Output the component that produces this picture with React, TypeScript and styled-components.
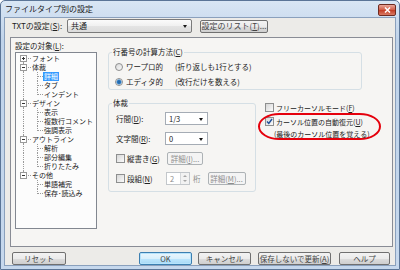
import React from 'react'
import styled, { createGlobalStyle, css } from 'styled-components'

const GlobalStyle = createGlobalStyle`
  html, body { margin: 0; padding: 0; }
  body {
    width: 400px;
    height: 270px;
    overflow: hidden;
    background: #fff;
    font-family: "Noto Sans CJK JP", "Noto Sans", sans-serif;
    font-size: 7.5px;
    color: #222;
  }
`

const Window = styled.div`
  box-sizing: border-box;
  width: 400px;
  height: 270px;
  display: flex;
  flex-direction: column;
  padding: 0 3px 3px 3px;
  background: linear-gradient(#d9e6f4, #bfd3ea 40px, #c6d8ed);
  border: 1px solid #5b7597;
  border-radius: 5px 5px 0 0;
`

const TitleBar = styled.div`
  height: 16px;
  display: flex;
  align-items: flex-start;
`

const Title = styled.span`
  margin: 2px 0 0 1px;
  font-size: 8px;
  line-height: 11px;
  color: #1b1b1b;
`

const CloseButton = styled.div`
  margin: 3px 0 0 auto;
  width: 18px;
  height: 12px;
  box-sizing: border-box;
  border: 1px solid #6f2b20;
  border-radius: 2px;
  background: linear-gradient(#e8a79a, #d25a43 50%, #c23a22 50%, #d97a64);
  display: flex;
  align-items: center;
  justify-content: center;
`

const Client = styled.div`
  flex: 1;
  display: flex;
  flex-direction: column;
  background: #ecebe8;
  border: 1px solid #8aa0bc;
`

const TopRow = styled.div`
  margin: 1px 0 0 7px;
  height: 14px;
  display: flex;
  align-items: center;
  font-size: 8px;
`

const Label = styled.span<{ $w?: number; $ml?: number }>`
  flex: none;
  ${p => p.$w !== undefined && css`width: ${p.$w}px;`}
  margin-left: ${p => p.$ml ?? 0}px;
  line-height: 10px;
  white-space: nowrap;
`

const U = styled.span`
  text-decoration: underline;
`

const Combo = styled.div<{ $w: number; $plain?: boolean }>`
  flex: none;
  width: ${p => p.$w}px;
  height: ${p => (p.$plain ? 13 : 14)}px;
  box-sizing: border-box;
  border: 1px solid ${p => (p.$plain ? '#a5acb5' : '#7a7a7a')};
  border-radius: ${p => (p.$plain ? 0 : 2)}px;
  background: ${p => (p.$plain ? '#fff' : 'linear-gradient(#fbfbfb, #f0f0f0 50%, #e4e4e4 51%, #dcdcdc)')};
  display: flex;
  align-items: center;
  padding-left: 3px;
  line-height: 10px;
`

const Arrow = styled.span`
  margin: 1px 4px 0 auto;
  width: 0;
  height: 0;
  border-left: 2.5px solid transparent;
  border-right: 2.5px solid transparent;
  border-top: 3px solid #1a1a1a;
`

const Button = styled.div<{ $w: number; $ml?: number; $default?: boolean; $disabled?: boolean }>`
  flex: none;
  width: ${p => p.$w}px;
  height: 13px;
  margin-left: ${p => p.$ml ?? 0}px;
  box-sizing: border-box;
  border: 1px solid #707070;
  border-radius: 2px;
  background: linear-gradient(#f3f3f3, #ebebeb 50%, #dddddd 51%, #cfcfcf);
  display: flex;
  align-items: center;
  justify-content: center;
  line-height: 10px;
  color: #444;
  white-space: nowrap;
  ${p =>
    p.$default &&
    css`
      border-color: #3c7fb1;
      background: linear-gradient(#eaf6fd, #d9f0fc 50%, #bee6fd 51%, #a7d9f5);
      box-shadow: inset 0 0 0 1px #b6e3fb;
    `}
  ${p =>
    p.$disabled &&
    css`
      border-color: #adb2b5;
      background: #f4f4f4;
      color: #8d8d8d;
    `}
`

const Panel = styled.div`
  position: relative;
  margin: 4px 0 0 5px;
  width: 383px;
  height: 210px;
  box-sizing: border-box;
  border: 1px solid #898c95;
  background: #f6f5f3;
  display: flex;
`

const LeftCol = styled.div`
  padding: 3px 0 0 4px;
  display: flex;
  flex-direction: column;
`

const TreeLabel = styled.div`
  line-height: 9px;
  height: 9px;
  white-space: nowrap;
`

const Tree = styled.div`
  margin-top: 2px;
  width: 82px;
  height: 177px;
  box-sizing: border-box;
  border: 1px solid #828790;
  background: #fcfcfc;
  padding-top: 1px;
  overflow: hidden;
`

const TreeRow = styled.div`
  display: flex;
  height: 9px;
  padding-left: 1px;
`

type Line = 'full' | 'top' | 'bottom' | 'none'

const Guide = styled.span<{ $w: number; $c: number; $v: Line; $h?: boolean }>`
  position: relative;
  flex: none;
  width: ${p => p.$w}px;
  height: 9px;
  &::before {
    content: '';
    position: absolute;
    left: ${p => p.$c}px;
    top: ${p => (p.$v === 'bottom' ? 4 : 0)}px;
    bottom: ${p => (p.$v === 'top' ? 4 : 0)}px;
    border-left: 1px dotted #9a9a9a;
    display: ${p => (p.$v === 'none' ? 'none' : 'block')};
  }
  &::after {
    content: '';
    position: absolute;
    left: ${p => p.$c}px;
    right: 0;
    top: 4px;
    border-top: 1px dotted #9a9a9a;
    display: ${p => (p.$h ? 'block' : 'none')};
  }
`

const Expander = styled.span<{ $open: boolean }>`
  position: absolute;
  z-index: 1;
  left: 3px;
  top: 1px;
  width: 7px;
  height: 7px;
  box-sizing: border-box;
  border: 1px solid #9a9a9a;
  background: #fff;
  &::before {
    content: '';
    position: absolute;
    left: 1px;
    top: 2px;
    width: 3px;
    height: 1px;
    background: #333;
  }
  &::after {
    content: '';
    position: absolute;
    left: 2px;
    top: 1px;
    width: 1px;
    height: 3px;
    background: #333;
    display: ${p => (p.$open ? 'none' : 'block')};
  }
`

const TreeText = styled.span<{ $selected?: boolean }>`
  padding: 0 1px;
  font-size: 7px;
  line-height: 9px;
  height: 9px;
  white-space: nowrap;
  ${p =>
    p.$selected &&
    css`
      background: #3399ff;
      color: #fff;
    `}
`

const MiddleCol = styled.div`
  margin-left: 11px;
  padding-top: 14px;
  display: flex;
  flex-direction: column;
`

const GroupBox = styled.div<{ $w: number; $h: number; $mt?: number }>`
  position: relative;
  width: ${p => p.$w}px;
  height: ${p => p.$h}px;
  margin-top: ${p => p.$mt ?? 0}px;
  box-sizing: border-box;
  border: 1px solid #d5dfe5;
  border-radius: 3px;
`

const Legend = styled.span`
  position: absolute;
  top: -6px;
  left: 3px;
  padding: 0 1px;
  background: #f6f5f3;
  line-height: 10px;
  white-space: nowrap;
`

const RadioList = styled.div`
  padding: 6px 0 0 6px;
  display: flex;
  flex-direction: column;
`

const OptionRow = styled.div<{ $h?: number }>`
  display: flex;
  align-items: center;
  height: ${p => p.$h ?? 15}px;
`

const Radio = styled.span<{ $on?: boolean }>`
  flex: none;
  width: 8px;
  height: 8px;
  box-sizing: border-box;
  border-radius: 50%;
  border: 1px solid #8e8f8f;
  background: ${p =>
    p.$on
      ? 'radial-gradient(circle, #1d5f9e 0, #2f7bc2 1.8px, #9cc4e8 2.6px, #f0f0f0 3px)'
      : 'linear-gradient(135deg, #d8d8d8, #fafafa)'};
`

const Note = styled.span<{ $ml?: number; $muted?: boolean }>`
  margin-left: ${p => p.$ml ?? 0}px;
  line-height: 10px;
  white-space: nowrap;
  ${p => p.$muted && css`color: #8d8d8d;`}
`

const FormList = styled.div`
  padding: 8px 0 0 7px;
  display: flex;
  flex-direction: column;
  gap: 7px;
`

const CheckBox = styled.span`
  flex: none;
  width: 9px;
  height: 9px;
  box-sizing: border-box;
  border: 1px solid #8e8f8f;
  background: linear-gradient(135deg, #d6d6d6, #fbfbfb);
  display: flex;
  align-items: center;
  justify-content: center;
`

const Spinner = styled.div`
  flex: none;
  width: 24px;
  height: 13px;
  box-sizing: border-box;
  border: 1px solid #c3c7cb;
  background: #fff;
  display: flex;
  align-items: center;
  padding-left: 3px;
  color: #8d8d8d;
  line-height: 10px;
`

const SpinArrows = styled.div`
  margin-left: auto;
  width: 9px;
  height: 11px;
  box-sizing: border-box;
  border-left: 1px solid #d4d7da;
  background: #f2f2f2;
  display: flex;
  flex-direction: column;
  align-items: center;
  justify-content: space-around;
`

const SpinTri = styled.span<{ $up?: boolean }>`
  width: 0;
  height: 0;
  border-left: 2px solid transparent;
  border-right: 2px solid transparent;
  ${p => (p.$up ? 'border-bottom: 2px solid #a5a5a5;' : 'border-top: 2px solid #a5a5a5;')}
`

const LowerRow = styled.div`
  display: flex;
  align-items: flex-start;
`

const RightChecks = styled.div`
  margin: 12px 0 0 9px;
  display: flex;
  flex-direction: column;
  gap: 3px;
  font-size: 7px;
`

const CheckLine = styled.div<{ $mt?: number }>`
  display: flex;
  align-items: center;
  height: 11px;
  margin-top: ${p => p.$mt ?? 0}px;
`

const Highlight = styled.div`
  position: absolute;
  left: 247px;
  top: 75px;
  width: 123px;
  height: 27px;
  box-sizing: border-box;
  border: 2.5px solid #e5000c;
  border-radius: 22px / 14px;
  pointer-events: none;
`

const ButtonRow = styled.div`
  margin: 5px 0 0 7px;
  height: 13px;
  display: flex;
`

const Check = () => (
  <svg width="7" height="7" viewBox="0 0 7 7">
    <path d="M1 3.6 L2.8 5.5 L6 1" fill="none" stroke="#1e4f9a" strokeWidth="1.4" />
  </svg>
)

type Node = {
  text: string
  root?: boolean
  open?: boolean
  rootLine: Line
  childLine?: Line
  selected?: boolean
}

const tree: Node[] = [
  { text: 'フォント', root: true, open: false, rootLine: 'bottom' },
  { text: '体裁', root: true, open: true, rootLine: 'full' },
  { text: '詳細', rootLine: 'full', childLine: 'full', selected: true },
  { text: 'タブ', rootLine: 'full', childLine: 'full' },
  { text: 'インデント', rootLine: 'full', childLine: 'top' },
  { text: 'デザイン', root: true, open: true, rootLine: 'full' },
  { text: '表示', rootLine: 'full', childLine: 'full' },
  { text: '複数行コメント', rootLine: 'full', childLine: 'full' },
  { text: '強調表示', rootLine: 'full', childLine: 'top' },
  { text: 'アウトライン', root: true, open: true, rootLine: 'full' },
  { text: '解析', rootLine: 'full', childLine: 'full' },
  { text: '部分編集', rootLine: 'full', childLine: 'full' },
  { text: '折りたたみ', rootLine: 'full', childLine: 'top' },
  { text: 'その他', root: true, open: true, rootLine: 'top' },
  { text: '単語補完', rootLine: 'none', childLine: 'full' },
  { text: '保存･読込み', rootLine: 'none', childLine: 'top' },
]

export default function App() {
  return (
    <>
      <GlobalStyle />
      <Window>
        <TitleBar>
          <Title>ファイルタイプ別の設定</Title>
          <CloseButton>
            <svg width="7" height="6" viewBox="0 0 7 6">
              <path d="M1 0.5 L6 5.5 M6 0.5 L1 5.5" stroke="#fff" strokeWidth="1.5" />
            </svg>
          </CloseButton>
        </TitleBar>
        <Client>
          <TopRow>
            <Label $w={55}>
              TXTの設定(<U>S</U>):
            </Label>
            <Combo $w={125}>
              共通
              <Arrow />
            </Combo>
            <Button $w={68} $ml={8}>
              設定のリスト(<U>T</U>)...
            </Button>
          </TopRow>

          <Panel>
            <LeftCol>
              <TreeLabel>
                設定の対象(<U>L</U>):
              </TreeLabel>
              <Tree>
                {tree.map(n => (
                  <TreeRow key={n.text}>
                    <Guide $w={14} $c={6} $v={n.rootLine} $h={n.root}>
                      {n.root && <Expander $open={!!n.open} />}
                    </Guide>
                    {!n.root && <Guide $w={12} $c={6} $v={n.childLine ?? 'none'} $h />}
                    <TreeText $selected={n.selected}>{n.text}</TreeText>
                  </TreeRow>
                ))}
              </Tree>
            </LeftCol>

            <MiddleCol>
              <GroupBox $w={254} $h={38}>
                <Legend>
                  行番号の計算方法(<U>C</U>)
                </Legend>
                <RadioList>
                  <OptionRow>
                    <Radio />
                    <Label $w={49} $ml={3}>
                      ワープロ的
                    </Label>
                    <Note>(折り返しも1行とする)</Note>
                  </OptionRow>
                  <OptionRow>
                    <Radio $on />
                    <Label $w={49} $ml={3}>
                      エディタ的
                    </Label>
                    <Note>(改行だけを数える)</Note>
                  </OptionRow>
                </RadioList>
              </GroupBox>

              <LowerRow>
                <GroupBox $w={148} $h={89} $mt={13}>
                  <Legend>体裁</Legend>
                  <FormList>
                    <OptionRow $h={13}>
                      <Label $w={49}>
                        行間(<U>D</U>):
                      </Label>
                      <Combo $w={43} $plain>
                        1/3
                        <Arrow />
                      </Combo>
                    </OptionRow>
                    <OptionRow $h={13}>
                      <Label $w={49}>
                        文字間(<U>R</U>):
                      </Label>
                      <Combo $w={43} $plain>
                        0
                        <Arrow />
                      </Combo>
                    </OptionRow>
                    <OptionRow $h={13}>
                      <CheckBox />
                      <Label $w={39} $ml={2}>
                        縦書き(<U>G</U>)
                      </Label>
                      <Button $w={36} $ml={1} $disabled>
                        詳細(<U>I</U>)...
                      </Button>
                    </OptionRow>
                    <OptionRow $h={13}>
                      <CheckBox />
                      <Label $w={39} $ml={2}>
                        段組(<U>N</U>)
                      </Label>
                      <Spinner>
                        2
                        <SpinArrows>
                          <SpinTri $up />
                          <SpinTri />
                        </SpinArrows>
                      </Spinner>
                      <Note $ml={3} $muted>
                        桁
                      </Note>
                      <Button $w={38} $ml={7} $disabled>
                        詳細(<U>M</U>)...
                      </Button>
                    </OptionRow>
                  </FormList>
                </GroupBox>

                <RightChecks>
                  <CheckLine>
                    <CheckBox />
                    <Note $ml={2}>
                      フリーカーソルモード(<U>F</U>)
                    </Note>
                  </CheckLine>
                  <CheckLine>
                    <CheckBox>
                      <Check />
                    </CheckBox>
                    <Note $ml={2}>
                      カーソル位置の自動復元(<U>U</U>)
                    </Note>
                  </CheckLine>
                  <CheckLine $mt={-2}>
                    <Note $ml={9}>(最後のカーソル位置を覚える)</Note>
                  </CheckLine>
                </RightChecks>
              </LowerRow>
            </MiddleCol>

            <Highlight />
          </Panel>

          <ButtonRow>
            <Button $w={54}>リセット</Button>
            <Button $w={53} $ml={73} $default>
              OK
            </Button>
            <Button $w={53} $ml={6}>
              キャンセル
            </Button>
            <Button $w={73} $ml={7}>
              保存しないで更新(<U>A</U>)
            </Button>
            <Button $w={51} $ml={8}>
              ヘルプ
            </Button>
          </ButtonRow>
        </Client>
      </Window>
    </>
  )
}
